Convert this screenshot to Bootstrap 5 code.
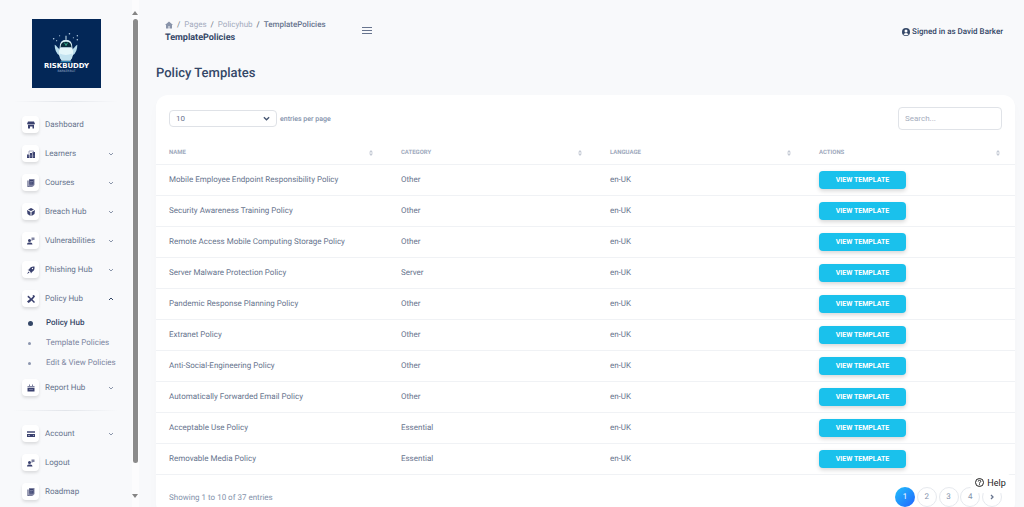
<!DOCTYPE html>
<html lang="en">
<head>
<meta charset="utf-8">
<meta name="viewport" content="width=device-width, initial-scale=1">
<title>Policy Templates</title>
<link href="https://cdn.jsdelivr.net/npm/bootstrap@5.3.0/dist/css/bootstrap.min.css" rel="stylesheet">
<style>
:root{--ink:#344767;--body:#67748e;--soft:#8392ab;--line:#f0f2f5}
body{font-family:Roboto,"Liberation Sans",sans-serif;font-size:8px;line-height:12px;color:var(--body);background:#f8f9fb;text-rendering:geometricPrecision}
a{color:inherit;text-decoration:none}
.side{width:139px}
.side-menu{padding:19px 14px 0 13px}
.logo{width:69px;height:69px;margin-left:19px}
.rule{height:1px;margin:8px 0;border:0;opacity:1;background:linear-gradient(90deg,transparent,#e2e5ea,transparent)}
.rule-top{margin-top:13px}
.item{height:29px;padding:0 4px 0 9px}
.tile{width:17px;height:17px;margin-right:6px;border-radius:4px;background:#fff;box-shadow:0 2px 3px rgba(20,20,20,.12)}
.tile svg{width:8px;height:8px;fill:#3a416f}
.chev{width:6px;height:6px;fill:none;stroke:#8b96aa;stroke-width:1}
.chev.open{stroke:var(--ink)}
.sub{height:20px;color:#7b85a0;padding-left:15px;white-space:nowrap}
.dot{width:18px}
.dot i{width:3px;height:3px;border-radius:50%;background:#8c96af}
.sub.active{color:var(--ink);font-weight:500}
.sub.active .dot i{width:5px;height:5px;background:var(--ink)}
.bar{width:7px;padding:10px 1px 8px 0;background:#fcfcfd}
.thumb{flex:0 1 444px;width:5px;border-radius:3px;background:#8b8b8b}
.arrow{width:6px;height:5px;fill:#858585}
.content{padding:0 9px 0 17px}
.topbar{padding:18px 12px 0 9px}
.breadcrumb{--bs-breadcrumb-item-padding-x:4px;--bs-breadcrumb-divider-color:#6c757d;font-size:8px;line-height:13px;color:#a3abbd}
.breadcrumb .active{color:var(--body);font-weight:500}
.page-name{font-size:9px;line-height:14px;font-weight:700;color:var(--ink)}
.burger{margin:8px 0 0 36px}
.user{color:var(--ink);font-weight:500;margin-top:8px}
.user svg{width:8px;height:8px;margin-right:2px}
.title{font-size:13px;line-height:20px;font-weight:500;color:var(--ink);margin:19px 0 11px}
.panel{border-radius:12px;box-shadow:0 6px 12px rgba(0,0,0,.02)}
.tools{padding:12px 13px 0}
.tools .form-select{width:108px;height:17px;padding:0 6px;font-size:8px;line-height:15px;color:#6b7690;border-color:#dfe2e7;border-radius:4px;background-size:7px 7px;background-position:right 6px center;background-image:url("data:image/svg+xml,%3csvg xmlns='http://www.w3.org/2000/svg' viewBox='0 0 16 16'%3e%3cpath fill='none' stroke='%23455571' stroke-width='3' d='m2 5 6 6 6-6'/%3e%3c/svg%3e")}
.tools label{font-size:7px;font-weight:500;color:var(--soft);margin-left:3px}
.tools .form-control{width:104px;height:23px;padding:0 6px;font-size:8px;border-color:#e0e3e8;border-radius:4px}
.form-control::placeholder{color:#a5adbd}
.grid{table-layout:fixed;--bs-table-bg:transparent;color:var(--body);font-size:8px;margin-top:11px}
.grid .name-col{width:27%}
.grid>:not(caption)>*>*{height:31px;padding:0 13px;color:var(--body);vertical-align:middle;border-color:var(--line)}
.grid>thead>tr>th{height:23px;padding:1px 15px 0 13px;font-size:6px;font-weight:700;color:#a0aabd}
.sort{width:4px;height:6px;fill:#c3c9d4}
.btn-view{width:87px;height:18px;padding:0;border:0;border-radius:4px;background:#1ac1ec;color:#fff;font-size:7px;line-height:18px;font-weight:700;box-shadow:0 2px 4px rgba(0,0,0,.16)}
.btn-view:hover{background:#14b2db;color:#fff}
.foot{padding:12px 13px 8px}
.summary{color:var(--soft);padding-top:3px}
.pages{width:107px}
.page-link{width:20px;height:20px;padding:0;border-radius:50%!important;border-color:#e6e9ee;font-size:8px;line-height:18px;text-align:center;color:var(--soft)}
.page-link svg{width:6px;height:6px;fill:none;stroke:#67748e;stroke-width:1.3}
.active>.page-link{border:0;line-height:20px;color:#fff;background:linear-gradient(135deg,#21c0fa,#2165ff)}
.help{right:13px;bottom:14px;width:41px;height:21px;padding:0;border:0;border-radius:8px;background:#fff;color:#222;font-size:9px}
.help svg{width:9px;height:9px;margin-right:3px}
</style>
</head>
<body>
<svg class="d-none">
  <symbol id="down" viewBox="0 0 6 6"><path d="m1 2 2 2 2-2"/></symbol>
  <symbol id="sort" viewBox="0 0 4 6"><path d="M0 2.400 2 0l2 2.400zM0 3.600h4L2 6z"/></symbol>
  <symbol id="shop" viewBox="0 0 16 16"><path d="M2 1h12l2 5H0zM1 7h14v1H1zM2 8h12v7h-3v-4H6v4H2z"/></symbol>
  <symbol id="office" viewBox="0 0 16 16"><path d="M0 9h5v7H0zM6 6h4v10H6zM11 4h5v12h-5z"/><path d="M4 8V2h9v3" fill="none" stroke="#8d91b0" stroke-width="1.5"/><path d="M1 12h14" stroke="#9da0bc"/></symbol>
  <symbol id="docs" viewBox="0 0 16 16"><path d="M4 0h11v12l-3 3H4z" opacity=".65"/><path d="M1 3h2v12h8v1H1zM5 2h8v9H5z"/><path d="M6 5h6M6 8h5" stroke="#aaaec8"/></symbol>
  <symbol id="box" viewBox="0 0 16 16"><path d="m8 0 6 3-6 3-6-3zM0 4l7 4v8l-6-4zM16 4 9 8v8l6-4z"/></symbol>
  <symbol id="person" viewBox="0 0 16 16"><circle cx="5" cy="7" r="3"/><path d="M0 15q0-5 5-4 6-1 6 4z"/><path d="M9 1h6v5h-3l-3 2z" opacity=".65"/></symbol>
  <symbol id="rocket" viewBox="0 0 16 16"><path d="M15 1Q7 0 4 7L1 8l3 1 3 3 1 3 2-3q6-3 5-11zM3 11l-3 5 5-3z"/><circle cx="11" cy="5" r="1.3" fill="#fff"/></symbol>
  <symbol id="tools" viewBox="0 0 16 16"><path d="m2 1 4 3 2 3 4-4-1-2 3-1 2 3-4 5-6 6-3 2-3-3 6-5-5-4zM11 9l5 5-2 2-5-5z"/></symbol>
  <symbol id="case" viewBox="0 0 16 16"><path d="M1 8h14v7H1z"/><path d="M1 4h14v3H1zM4 1h2v3H4zM10 1h2v3h-2z" opacity=".65"/><path d="M4 11h8" stroke="#aaaec8"/></symbol>
  <symbol id="card-pay" viewBox="0 0 16 16"><path d="M0 2h16v4H0z" opacity=".7"/><path d="M0 8h16v6H0z"/><path d="M2 11h4M12 11h2" stroke="#fff"/></symbol>
</svg>
<div class="d-flex vh-100 overflow-hidden">
  <aside class="side d-flex flex-shrink-0">
    <nav class="side-menu flex-grow-1 overflow-hidden" aria-label="Main">
      <a href="#" class="d-block" aria-label="Riskbuddy">
        <svg class="logo d-block" viewBox="0 0 70 70">
          <path fill="#032757" d="M0 0h70v70H0z"/>
          <g fill="#b9d0e4"><circle cx="22" cy="20" r=".8"/><circle cx="25" cy="22" r=".6"/><circle cx="28" cy="17" r=".6"/><circle cx="38" cy="15" r=".8"/><circle cx="42" cy="19" r=".6"/><circle cx="46" cy="17" r=".7"/><circle cx="46" cy="21" r=".8"/></g>
          <path d="M23 26q1 0 3 3l3 3-1 5q-5-3-5-11M46 26q-1 0-3 3l-3 3 1 5q5-3 5-11" fill="#b9ddec"/>
          <path d="M34.500 17v4" stroke="#d5edf5"/>
          <path d="M28 29q0-8 6.500-8t6.500 8z" fill="#d9f0f7"/>
          <path d="M29 28.500q0-5.500 5.500-5.500t5.500 5.500z" fill="#092c3b"/>
          <path d="m33 24 1.500 3L36 24" fill="none" stroke="#38b995" stroke-width=".9"/>
          <path d="M28 29h13q2 9-2 13h-9q-4-4-2-13" fill="#e4f6fa"/>
          <path d="M28 35q6 3 13 0 0 4-2 7h-9q-2-3-2-7" fill="#c3e3f0"/>
          <path d="M30 42.500h9l2 1.500H28z" fill="#3186b6"/>
          <text x="35" y="50" text-anchor="middle" font-family="DejaVu Sans" font-size="7" font-weight="700" fill="#fff">RISKBUDDY</text>
          <text x="35" y="54" text-anchor="middle" font-family="DejaVu Sans" font-size="3" fill="#9fb4cd">BARKERBOT</text>
        </svg>
      </a>
      <hr class="rule rule-top">
      <div class="menu">
        <a href="#" class="item d-flex align-items-center"><span class="tile d-flex align-items-center justify-content-center"><svg><use href="#shop"/></svg></span>Dashboard</a>
        <a href="#" class="item d-flex align-items-center"><span class="tile d-flex align-items-center justify-content-center"><svg><use href="#office"/></svg></span>Learners<svg class="chev ms-auto"><use href="#down"/></svg></a>
        <a href="#" class="item d-flex align-items-center"><span class="tile d-flex align-items-center justify-content-center"><svg><use href="#docs"/></svg></span>Courses<svg class="chev ms-auto"><use href="#down"/></svg></a>
        <a href="#" class="item d-flex align-items-center"><span class="tile d-flex align-items-center justify-content-center"><svg><use href="#box"/></svg></span>Breach Hub<svg class="chev ms-auto"><use href="#down"/></svg></a>
        <a href="#" class="item d-flex align-items-center"><span class="tile d-flex align-items-center justify-content-center"><svg><use href="#person"/></svg></span>Vulnerabilities<svg class="chev ms-auto"><use href="#down"/></svg></a>
        <a href="#" class="item d-flex align-items-center"><span class="tile d-flex align-items-center justify-content-center"><svg><use href="#rocket"/></svg></span>Phishing Hub<svg class="chev ms-auto"><use href="#down"/></svg></a>
        <a href="#" class="item d-flex align-items-center"><span class="tile d-flex align-items-center justify-content-center"><svg><use href="#tools"/></svg></span>Policy Hub<svg class="chev open ms-auto" viewBox="0 0 6 6"><path d="m1 4 2-2 2 2"/></svg></a>
        <a href="#" class="sub active d-flex align-items-center"><span class="dot d-flex"><i></i></span>Policy Hub</a>
        <a href="#" class="sub d-flex align-items-center"><span class="dot d-flex"><i></i></span>Template Policies</a>
        <a href="#" class="sub d-flex align-items-center"><span class="dot d-flex"><i></i></span>Edit &amp; View Policies</a>
        <a href="#" class="item d-flex align-items-center"><span class="tile d-flex align-items-center justify-content-center"><svg><use href="#case"/></svg></span>Report Hub<svg class="chev ms-auto"><use href="#down"/></svg></a>
      </div>
      <hr class="rule">
      <a href="#" class="item d-flex align-items-center"><span class="tile d-flex align-items-center justify-content-center"><svg><use href="#card-pay"/></svg></span>Account<svg class="chev ms-auto"><use href="#down"/></svg></a>
      <a href="#" class="item d-flex align-items-center"><span class="tile d-flex align-items-center justify-content-center"><svg><use href="#person"/></svg></span>Logout</a>
      <a href="#" class="item d-flex align-items-center"><span class="tile d-flex align-items-center justify-content-center"><svg><use href="#docs"/></svg></span>Roadmap</a>
    </nav>
    <div class="bar d-flex flex-column align-items-center flex-shrink-0" aria-hidden="true">
      <svg class="arrow mb-1 flex-shrink-0" viewBox="0 0 6 5"><path d="M3 1 6 5H0z"/></svg>
      <span class="thumb"></span>
      <svg class="arrow mt-auto flex-shrink-0" viewBox="0 0 6 5"><path d="M0 0h6L3 4z"/></svg>
    </div>
  </aside>
  <main class="content flex-grow-1 overflow-hidden">
    <header class="topbar d-flex align-items-start">
      <div>
        <nav aria-label="breadcrumb">
          <ol class="breadcrumb mb-0">
            <li class="breadcrumb-item"><a href="#" aria-label="Home"><svg width="8" height="8" viewBox="0 0 16 16" fill="#8994aa"><path d="m8 1 8 7h-2v7H9v-5H7v5H2V8H0z"/></svg></a></li>
            <li class="breadcrumb-item"><a href="#">Pages</a></li>
            <li class="breadcrumb-item"><a href="#">Policyhub</a></li>
            <li class="breadcrumb-item active" aria-current="page">TemplatePolicies</li>
          </ol>
        </nav>
        <div class="page-name">TemplatePolicies</div>
      </div>
      <button type="button" class="burger btn p-0 border-0 d-flex" aria-label="Toggle menu"><svg width="10" height="9" viewBox="0 0 10 9"><path d="M0 1.500h10M0 4.500h10M0 7.500h10" stroke="#67748e"/></svg></button>
      <a href="#" class="user ms-auto d-flex align-items-center"><svg viewBox="0 0 16 16"><circle cx="8" cy="8" r="8" fill="#344767"/><circle cx="8" cy="6" r="3" fill="#fff"/><path d="M3 13q1-3 5-3t5 3q-5 3-10 0" fill="#fff"/></svg>Signed in as David Barker</a>
    </header>
    <h1 class="title">Policy Templates</h1>
    <section class="panel bg-white">
      <div class="tools d-flex align-items-center justify-content-between">
        <div class="d-flex align-items-center"><select class="form-select" id="per-page"><option>10</option><option>25</option><option>50</option></select><label for="per-page">entries per page</label></div>
        <input type="search" class="form-control" placeholder="Search..." aria-label="Search">
      </div>
      <table class="table grid mb-0">
        <colgroup><col class="name-col"><col><col><col></colgroup>
        <thead><tr>
          <th scope="col"><div class="d-flex align-items-center justify-content-between">NAME<svg class="sort"><use href="#sort"/></svg></div></th>
          <th scope="col"><div class="d-flex align-items-center justify-content-between">CATEGORY<svg class="sort"><use href="#sort"/></svg></div></th>
          <th scope="col"><div class="d-flex align-items-center justify-content-between">LANGUAGE<svg class="sort"><use href="#sort"/></svg></div></th>
          <th scope="col"><div class="d-flex align-items-center justify-content-between">ACTIONS<svg class="sort"><use href="#sort"/></svg></div></th>
        </tr></thead>
        <tbody>
          <tr><td>Mobile Employee Endpoint Responsibility Policy</td><td>Other</td><td>en-UK</td><td><button type="button" class="btn btn-view d-block">VIEW TEMPLATE</button></td></tr>
          <tr><td>Security Awareness Training Policy</td><td>Other</td><td>en-UK</td><td><button type="button" class="btn btn-view d-block">VIEW TEMPLATE</button></td></tr>
          <tr><td>Remote Access Mobile Computing Storage Policy</td><td>Other</td><td>en-UK</td><td><button type="button" class="btn btn-view d-block">VIEW TEMPLATE</button></td></tr>
          <tr><td>Server Malware Protection Policy</td><td>Server</td><td>en-UK</td><td><button type="button" class="btn btn-view d-block">VIEW TEMPLATE</button></td></tr>
          <tr><td>Pandemic Response Planning Policy</td><td>Other</td><td>en-UK</td><td><button type="button" class="btn btn-view d-block">VIEW TEMPLATE</button></td></tr>
          <tr><td>Extranet Policy</td><td>Other</td><td>en-UK</td><td><button type="button" class="btn btn-view d-block">VIEW TEMPLATE</button></td></tr>
          <tr><td>Anti-Social-Engineering Policy</td><td>Other</td><td>en-UK</td><td><button type="button" class="btn btn-view d-block">VIEW TEMPLATE</button></td></tr>
          <tr><td>Automatically Forwarded Email Policy</td><td>Other</td><td>en-UK</td><td><button type="button" class="btn btn-view d-block">VIEW TEMPLATE</button></td></tr>
          <tr><td>Acceptable Use Policy</td><td>Essential</td><td>en-UK</td><td><button type="button" class="btn btn-view d-block">VIEW TEMPLATE</button></td></tr>
          <tr><td>Removable Media Policy</td><td>Essential</td><td>en-UK</td><td><button type="button" class="btn btn-view d-block">VIEW TEMPLATE</button></td></tr>
        </tbody>
      </table>
      <div class="foot d-flex align-items-center justify-content-between">
        <span class="summary">Showing 1 to 10 of 37 entries</span>
        <ul class="pages pagination justify-content-between mb-0">
          <li class="page-item active"><a class="page-link" href="#">1</a></li>
          <li class="page-item"><a class="page-link" href="#">2</a></li>
          <li class="page-item"><a class="page-link" href="#">3</a></li>
          <li class="page-item"><a class="page-link" href="#">4</a></li>
          <li class="page-item"><a class="page-link d-flex align-items-center justify-content-center" href="#" aria-label="Next"><svg viewBox="0 0 6 6"><path d="m2 1 2 2-2 2"/></svg></a></li>
        </ul>
      </div>
    </section>
  </main>
</div>
<button type="button" class="help position-fixed d-flex align-items-center justify-content-center"><svg viewBox="0 0 18 18" fill="none" stroke="#222" stroke-width="2"><circle cx="9" cy="9" r="8"/><path d="M6.500 7q0-2.500 2.500-2.500T11.500 7q0 1.500-2.500 2.500v1.500M9 12.500v2"/></svg>Help</button>
<script src="https://cdn.jsdelivr.net/npm/bootstrap@5.3.0/dist/js/bootstrap.bundle.min.js"></script>
</body>
</html>
